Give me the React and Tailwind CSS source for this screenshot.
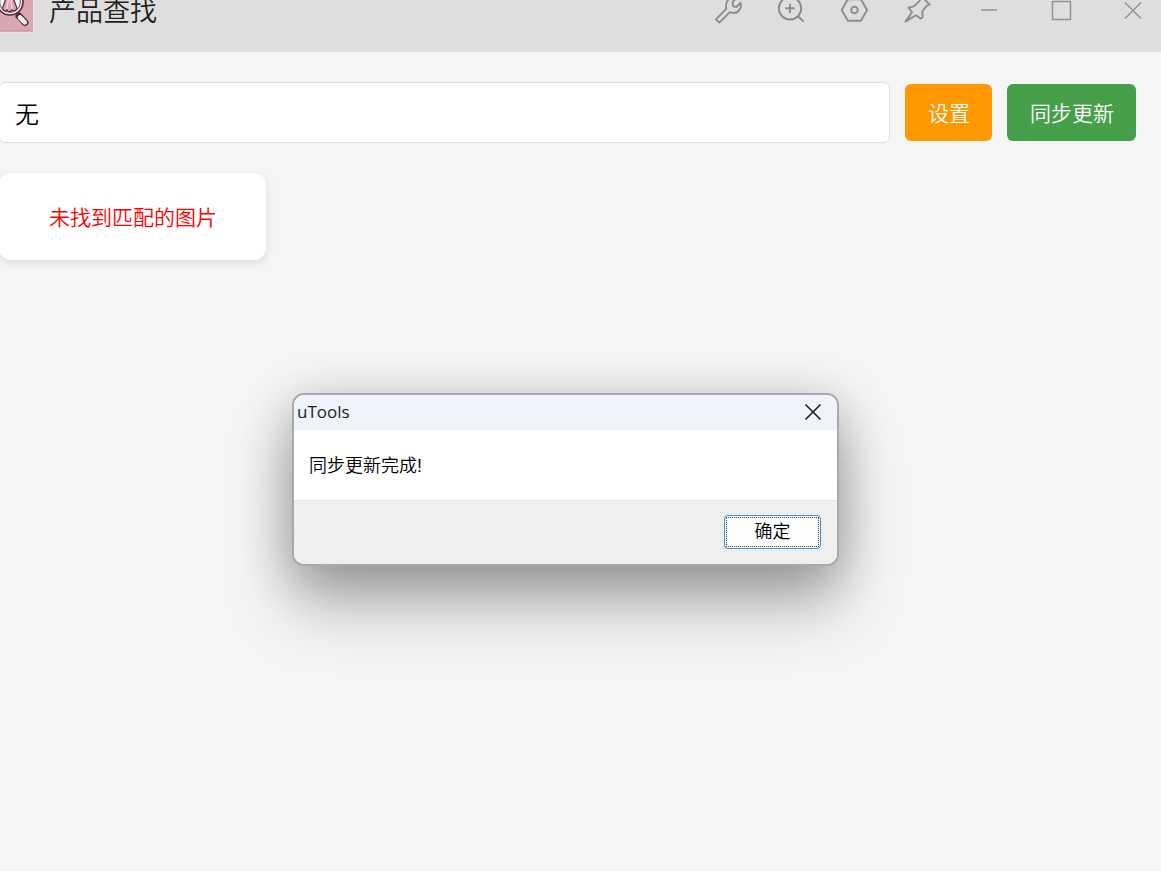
import { useState } from 'react'

const iconProps = {
  viewBox: '0 0 30 30',
  width: 30,
  height: 30,
  fill: 'none',
  stroke: 'currentColor',
  strokeWidth: 1.9,
  strokeLinejoin: 'round',
  'aria-hidden': true,
}

const toolIcons = [
  {
    label: '工具',
    icon: (
      <path d="M2 24.4 12.4 13.6C10.9 8 14 2.5 19.9 2.6L22.3 3.2 18.5 7.2 19.1 11.4 22.5 12 26.5 7.8C28.1 12.6 24.700 18.4 18.9 17.9L15.9 17.2 5.3 27.7Z" />
    ),
  },
  {
    label: '放大',
    icon: (
      <>
        <circle cx="13" cy="13.3" r="11.2" />
        <path d="M21 21.2 26.6 26.6M8.4 13.3h9.2M13 8.7v9.2" />
      </>
    ),
  },
  {
    label: '设置选项',
    icon: (
      <>
        <path d="M7.9 4.3H20.9L27.1 15 20.9 25.7H7.9L1.7 15Z" />
        <circle cx="14.500" cy="15" r="3.3" />
      </>
    ),
  },
  {
    label: '固定',
    icon: (
      <path d="M2.4 26.6 9 17.3 5.6 12.6 10.8 11.4 16.2 6.4 18.8 1.8 26.8 9.6 24.4 10.2 19.4 16 19.6 22 17.8 23.6 12.8 20.2Z" />
    ),
  },
]

const windowIcons = [
  { label: '最小化', icon: <path d="M7 15h16" /> },
  { label: '最大化', icon: <path d="M6.500 6.500h18v18h-18z" /> },
  { label: '关闭', icon: <path d="M7 7.500 23 23.500M23 7.500 7 23.500" /> },
]

function AppLogo() {
  return (
    <svg viewBox="0 0 46 46" className="-ml-3 size-[46px] shrink-0" aria-hidden="true">
      <defs>
        <linearGradient id="logo-bg" x1="0" y1="0" x2="1" y2="1">
          <stop offset="0" stopColor="#d9a3ae" />
          <stop offset="1" stopColor="#d8a9b3" />
        </linearGradient>
      </defs>
      <rect width="46" height="46" rx="2" fill="#f0dfe2" />
      <rect width="45" height="45" rx="1" fill="url(#logo-bg)" />
      <path d="M0 43.5h45" stroke="#cf97a4" strokeWidth="1" />
      <path d="m31 29 6 6.500" stroke="#54283f" strokeWidth="7" strokeLinecap="round" />
      <path d="m32 30.500 4.800 4.800" stroke="#f0f2ea" strokeWidth="4.6" strokeLinecap="round" />
      <circle cx="22" cy="15" r="13" fill="#e9efe8" stroke="#54283f" strokeWidth="1.6" />
      <circle cx="22" cy="15" r="10.4" fill="#f3f4ef" stroke="#704b5e" strokeWidth="1" />
      <path
        d="M19 8 14.5 21.5C16 24.5 18 24.5 19 23c1 2 4.500 2 5 0 1 1.500 3.500 1 5-1.500L24 8Z"
        fill="#d9a9b1"
        stroke="#54283f"
        strokeWidth="1.2"
      />
      <path d="M20.500 12 19 22M22.800 12 24 22" stroke="#f3e4e6" strokeWidth="1" />
    </svg>
  )
}

function TitleBar() {
  return (
    <header className="-mt-8 flex h-21 shrink-0 items-center bg-[#dedede]">
      <AppLogo />
      <h1 className="mt-1 ml-[15px] text-[27px] leading-6 font-[350] text-[#222]">产品查找</h1>

      <nav className="ml-auto flex text-[#8c8c8c]">
        {toolIcons.map((item) => (
          <button key={item.label} aria-label={item.label} className="flex w-[63px] justify-center">
            <svg {...iconProps}>{item.icon}</svg>
          </button>
        ))}
      </nav>
      <div className="-mr-2 ml-1 flex text-[#939393]">
        {windowIcons.map((item) => (
          <button key={item.label} aria-label={item.label} className="flex w-18 justify-center">
            <svg {...iconProps} strokeWidth={1.5}>
              {item.icon}
            </svg>
          </button>
        ))}
      </div>
    </header>
  )
}

function MessageBox({ title, message, onClose }) {
  return (
    <div
      role="dialog"
      aria-label={title}
      className="absolute top-[393px] left-[292px] w-[547px] overflow-hidden rounded-xl border-2 border-[#a9a9a9] bg-white shadow-[0_40px_64px_rgba(0,0,0,0.26),0_10px_50px_rgba(0,0,0,0.24)]"
    >
      <div className="flex h-[35px] items-center justify-between bg-[#eff3fb] pr-[15px] pb-px pl-[3px]">
        <h2 className="font-['Open_Sans','Noto_Sans',sans-serif] text-[17px] leading-6 text-[#222]">{title}</h2>
        <button aria-label="关闭" onClick={onClose} className="text-[#1f1f1f]">
          <svg viewBox="0 0 18 18" width="18" height="18" fill="none" stroke="currentColor" strokeWidth="1.6">
            <path d="M1.500 1.500 16.500 16.500M16.500 1.500 1.500 16.500" />
          </svg>
        </button>
      </div>

      <p className="px-[15px] pt-6 pb-[22px] text-lg leading-6 font-[350] text-black">{message}</p>

      <div className="flex justify-end border-t border-[#e3e3e3] bg-[#efefef] px-4 pt-[14px] pb-[15px]">
        <button
          onClick={onClose}
          className="h-[34px] w-[97px] rounded-sm border border-[#3a91d8] bg-[#fdfdfd] p-px text-lg leading-7 font-[350] text-black"
        >
          <span className="block border border-dotted border-[#444] pt-px leading-[27px]">确定</span>
        </button>
      </div>
    </div>
  )
}

function App() {
  const [keyword, setKeyword] = useState('无')
  const [dialogOpen, setDialogOpen] = useState(true)

  return (
    <div className="relative flex min-h-screen flex-col overflow-hidden bg-[#f5f5f5] font-['Liberation_Sans','Noto_Sans_CJK_SC',sans-serif]">
      <TitleBar />

      <main className="-ml-px pt-[30px] pr-[25px]">
        <div className="flex items-center gap-[15px]">
          <input
            type="text"
            aria-label="产品名称"
            value={keyword}
            onChange={(e) => setKeyword(e.target.value)}
            className="h-[61px] min-w-0 flex-1 rounded-md border border-[#ddd] bg-white px-[15px] text-2xl font-[350] text-black outline-none"
          />
          <button className="h-[57px] rounded-md bg-[#ff9800] pt-[2px] pr-[22px] pl-[23px] text-[21px] font-[350] text-white">
            设置
          </button>
          <button className="h-[57px] rounded-md bg-[#46a049] pt-[2px] pr-[22px] pl-[23px] text-[21px] font-[350] text-white">
            同步更新
          </button>
        </div>

        <div className="mt-[30px] flex">
          <p className="rounded-xl bg-white pt-[29px] pr-[49px] pb-[27px] pl-[50px] text-[21px] leading-[31px] font-[350] text-[#ff0000] shadow-[0_3px_8px_rgba(0,0,0,0.1)]">
            未找到匹配的图片
          </p>
        </div>
      </main>

      {dialogOpen && (
        <MessageBox title="uTools" message="同步更新完成!" onClose={() => setDialogOpen(false)} />
      )}
    </div>
  )
}

export default App
